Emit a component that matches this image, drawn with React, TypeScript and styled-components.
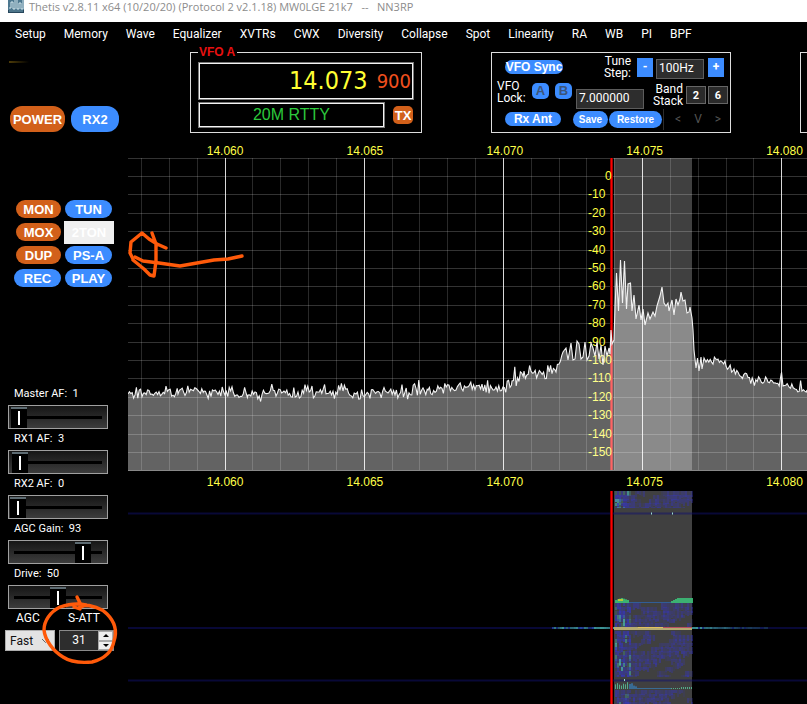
import React, { useState } from "react";
import styled, { createGlobalStyle, css } from "styled-components";

const BLUE = "#3c8cff";
const ORANGE = "#d2601a";
const MARK = "#ff5a0a";

const GlobalStyle = createGlobalStyle`
  * { box-sizing: border-box; }
  body { margin: 0; background: #000; color: #fff; font: 12px Roboto, sans-serif; overflow-x: hidden; }
  button, input, select { font: inherit; margin: 0; }
`;

const Window = styled.div`
  display: flex;
  flex-direction: column;
  min-height: 100vh;
  overflow: hidden;
`;

const TitleBar = styled.header`
  display: flex;
  gap: 5px;
  height: 22px;
  padding-left: 8px;
  background: #fff;
  color: #8c8c8c;
  font-family: "Open Sans", sans-serif;
  font-size: 11px;
  line-height: 14px;
  white-space: pre;
`;

const MenuBar = styled.nav`
  display: flex;
  gap: 18px;
  height: 24px;
  padding-left: 15px;
  line-height: 24px;
`;

const MenuLink = styled.a`
  color: #fff;
  text-decoration: none;
  white-space: nowrap;
`;

const Body = styled.div`
  display: flex;
  flex: 1;
`;

const Sidebar = styled.aside`
  position: relative;
  display: flex;
  flex-direction: column;
  flex: 0 0 128px;
`;

const Smear = styled.i`
  width: 20px;
  height: 2px;
  margin: 15px 0 0 9px;
  background: linear-gradient(90deg, #4e3c08, #000);
`;

const PowerRow = styled.div`
  display: flex;
  gap: 6px;
  margin: 43px 0 0 10px;
`;

const Pill = styled.button<{ $on?: boolean }>`
  padding: 0;
  border: 0;
  border-radius: 10px;
  background: ${(p) => (p.$on ? ORANGE : BLUE)};
  color: #fff;
  font: bold 13px "Liberation Sans", sans-serif;
  white-space: nowrap;
`;

const PowerButton = styled(Pill)<{ $wide?: boolean }>`
  width: ${(p) => (p.$wide ? 55 : 48)}px;
  height: 26px;
  border-radius: 12px;
`;

const ToggleGrid = styled.div`
  display: grid;
  grid-template-columns: 47px 47px;
  grid-auto-rows: 18px;
  gap: 5px 4px;
  justify-items: end;
  margin: 68px 0 0 14px;
`;

const Toggle = styled(Pill)<{ $short?: boolean; $blank?: boolean }>`
  width: ${(p) => (p.$short ? 45 : 47)}px;
  ${(p) =>
    p.$blank &&
    css`
      width: 50px;
      height: 23px;
      margin: -2px -2px 0 0;
      border-radius: 0;
      background: #f0f0f0;
    `}
`;

const Sliders = styled.div`
  display: flex;
  flex-direction: column;
  gap: 2px;
  margin: 99px 20px 0 8px;
`;

const SliderField = styled.label`
  display: flex;
  flex-direction: column;
  gap: 3px;
  font-size: 11px;
  line-height: 16px;
  white-space: pre;
`;

const SliderName = styled.span`
  padding-left: 6px;
`;

const thumb = css`
  width: 16px;
  height: 21px;
  border: 0;
  border-radius: 0;
  border-top: 2px solid #5d6b72;
  background: linear-gradient(#fff, #fff) center / 2px 14px no-repeat #000;
`;

const Range = styled.input`
  appearance: none;
  width: 100%;
  height: 24px;
  padding: 0 1px;
  border: 1px solid #a0a0a0;
  background:
    linear-gradient(#000, #000) center / 88px 3px no-repeat,
    linear-gradient(#161616, #3c3c3c);
  &::-webkit-slider-thumb { appearance: none; ${thumb} }
  &::-moz-range-thumb { ${thumb} }
`;

const AgcRow = styled.div`
  display: grid;
  grid-template-columns: 50px 55px;
  column-gap: 4px;
  row-gap: 4px;
  margin: 1px 0 0 5px;
  font-size: 12px;
`;

const AgcLabel = styled.label<{ $indent: number }>`
  padding-left: ${(p) => p.$indent}px;
  line-height: 16px;
`;

const SelectWrap = styled.div`
  display: grid;
  align-items: center;
  & > * { grid-area: 1 / 1; }
  & > svg { justify-self: end; margin-right: 5px; pointer-events: none; }
`;

const Select = styled.select`
  appearance: none;
  height: 21px;
  padding: 0 0 0 4px;
  border: 1px solid #adadad;
  border-radius: 0;
  background: #e3e3e3;
  color: #111;
  font-size: 12px;
`;

const Stepper = styled.div`
  display: grid;
  grid-template: 1fr 1fr / 1fr 15px;
  height: 21px;
  border: 1px solid #8a8a8a;
  background: #2d2d2d;
`;

const StepValue = styled.input`
  grid-row: span 2;
  min-width: 0;
  width: 100%;
  padding: 0 0 2px;
  border: 0;
  background: transparent;
  color: #fff;
  text-align: center;
`;

const StepButton = styled.button`
  display: grid;
  place-items: center;
  min-height: 0;
  padding: 0;
  border: 1px solid #aaa;
  background: #eee;
  color: #000;
`;

const Overlay = styled.svg`
  position: absolute;
  overflow: visible;
  pointer-events: none;
  fill: none;
  stroke: ${MARK};
  stroke-width: 3.4px;
  stroke-linecap: round;
  stroke-linejoin: round;
`;

const CircleMark = styled(Overlay)`
  left: 44px;
  bottom: 40px;
`;

const ArrowMark = styled(Overlay)`
  left: 1px;
  top: 74px;
`;

const Main = styled.main`
  flex: 1;
  min-width: 0;
`;

const Panels = styled.div`
  display: flex;
  padding: 6px 0 0 62px;
  height: 87px;
`;

const VfoBox = styled.fieldset`
  flex: 0 0 232px;
  min-width: 0;
  height: 86px;
  margin: -5px 69px 0 0;
  padding: 0 7px;
  border: 1px solid #ddd;
`;

const VfoTitle = styled.legend`
  padding: 0 2px 0 1px;
  color: #e81010;
  font: bold 12px/11px "Liberation Sans", sans-serif;
`;

const screen = css`
  border: 2px solid #f4f4f4;
  outline: 1px solid #777;
  outline-offset: -1px;
`;

const FreqDisplay = styled.output`
  ${screen}
  display: flex;
  align-items: center;
  justify-content: flex-end;
  gap: 9px;
  height: 38px;
  margin-top: 4px;
  padding-right: 1px;
  color: #ff3;
  font: 25px/34px "DejaVu Sans Condensed", "DejaVu Sans", sans-serif;
`;

const FreqTail = styled.span`
  color: #f0501e;
  font-size: 20px;
`;

const BandRow = styled.div`
  display: flex;
  align-items: center;
  gap: 8px;
  margin-top: 2px;
`;

const BandName = styled.output`
  ${screen}
  flex: 0 0 187px;
  height: 26px;
  color: #2cc83c;
  font: 16px/22px "Liberation Sans", sans-serif;
  text-align: center;
`;

const TxButton = styled(Pill)`
  width: 20px;
  height: 18px;
  border-radius: 5px;
`;

const SyncBox = styled.section`
  flex: 0 0 240px;
  height: 81px;
  border: 1px solid #ddd;
`;

const EdgeBox = styled.section`
  flex: 1 0 7px;
  height: 81px;
  margin-left: 69px;
  border: 1px solid #ddd;
  border-right: 0;
`;

const SyncRow = styled.div<{ $indent: number; $height: number }>`
  display: flex;
  align-items: center;
  height: ${(p) => p.$height}px;
  padding-left: ${(p) => p.$indent}px;
`;

const Spacer = styled.i<{ $w: number }>`
  flex: 0 0 ${(p) => p.$w}px;
`;

const PanelPill = styled(Pill)<{ $w: number; $h: number; $small?: boolean }>`
  flex: 0 0 ${(p) => p.$w}px;
  height: ${(p) => p.$h}px;
  display: flex;
  align-items: center;
  justify-content: center;
  font-size: ${(p) => (p.$small ? 10 : 12)}px;
`;

const LockButton = styled(Pill)`
  flex: 0 0 17px;
  height: 16px;
  margin-bottom: 9px;
  border-radius: 5px;
  color: #3c5478;
`;

const TwoLine = styled.label<{ $w: number; $right?: boolean }>`
  flex: 0 0 ${(p) => p.$w}px;
  line-height: 12px;
  text-align: ${(p) => (p.$right ? "right" : "left")};
`;

const RaisedLabel = styled(TwoLine)`
  margin-bottom: 7px;
`;

const SquareButton = styled.button`
  flex: 0 0 16px;
  height: 19px;
  padding: 0;
  border: 0;
  background: ${BLUE};
  color: #fff;
  font-weight: bold;
`;

const DarkInput = styled.input<{ $w: number; $low?: boolean }>`
  flex: 0 0 ${(p) => p.$w}px;
  width: ${(p) => p.$w}px;
  height: 20px;
  align-self: ${(p) => (p.$low ? "flex-end" : "center")};
  margin-top: ${(p) => (p.$low ? 0 : 4)}px;
  padding: 0 2px 2px;
  border: 1px solid #5c5c5c;
  background: #2d2d2d;
  color: #fff;
`;

const StackButton = styled.button`
  flex: 0 0 20px;
  height: 18px;
  padding: 0;
  border: 1px solid #666;
  background: #2a2a2a;
  color: #fff;
  font-weight: bold;
  font-size: 11px;
`;

const StackNav = styled.div`
  display: flex;
  flex: 1;
  height: 21px;
  padding-left: 4px;
  border-left: 1px solid #2c2c2c;
`;

const NavButton = styled.button`
  flex: 0 0 20px;
  padding: 0;
  border: 0;
  background: none;
  color: #555;
`;

const Display = styled.div`
  position: relative;
  padding-top: 9px;
`;

const Axis = styled.div<{ $height: number }>`
  display: grid;
  grid-template-columns: repeat(5, 20.6%);
  height: ${(p) => p.$height}px;
  padding: 0;
  margin-left: 4%;
  width: 100%;
  color: #ffff48;
  font: 12px "Liberation Sans", sans-serif;
  line-height: ${(p) => p.$height + 3}px;
  text-align: center;
`;

const Chart = styled.svg`
  display: block;
  width: 100%;
  height: auto;
`;

const LevelText = styled.text`
  fill: #ffff40;
  font: 12px "Liberation Sans", sans-serif;
`;

/* Repeatable noise source, so each render gives the same trace. */
function noise(seed: number) {
  let s = seed;
  return () => {
    s = (s + 0x6d2b79f5) | 0;
    let t = Math.imul(s ^ (s >>> 15), 1 | s);
    t = (t + Math.imul(t ^ (t >>> 7), 61 | t)) ^ t;
    return ((t ^ (t >>> 14)) >>> 0) / 4294967296;
  };
}

/* [x, level, jitter towards the next point]; jitter 0 joins directly. */
const LEVELS: [number, number, number][] = [
  [0, 236, 7], [24, 236, 8], [50, 236, 6], [64, 232, 4], [76, 233, 7], [120, 237, 7], [156, 233, 6],
  [170, 234, 7], [215, 233, 6], [228, 236, 7], [260, 235, 7], [300, 232, 7], [340, 229, 7], [375, 229, 7],
  [384, 223, 6], [396, 213, 6], [410, 216, 8], [428, 214, 6], [431, 206, 6], [435, 194, 0],
  [438, 190, 0], [440, 202, 0], [443, 185, 0], [445, 202, 0], [447, 201, 0], [449, 183, 0],
  [451, 186, 0], [453, 201, 0], [455, 199, 0], [457, 184, 0], [459, 202, 0], [461, 198, 0],
  [463, 185, 0], [465, 190, 0], [467, 198, 0], [469, 184, 0], [471, 201, 0], [473, 187, 0],
  [475, 207, 0], [477, 188, 0], [479, 198, 0], [481, 190, 0], [482, 196, 0],
  [483, 172, 0], [484, 186, 0], [486, 182, 0], [487, 150, 0], [488.5, 115, 0], [490.5, 153, 0],
  [492.5, 102, 0], [494.5, 145, 0], [496.5, 103, 0], [498.5, 151, 0], [500, 126, 0], [502.5, 125, 0],
  [504, 153, 0], [506, 137, 0], [508, 161, 0], [511, 147, 0], [513, 162, 0], [515, 151, 0],
  [517, 167, 0], [520, 155, 0], [522, 161, 0], [525, 154, 0], [527, 158, 0], [529, 148, 0],
  [532, 138, 0], [534, 129, 0], [536, 145, 0], [538, 148, 0], [540, 145, 0], [541, 153, 0],
  [544, 142, 0], [546, 157, 0], [548, 141, 0], [550, 147, 0], [552, 141, 0], [553, 134, 0],
  [555, 143, 0], [557, 142, 0], [559, 155, 0], [561, 154, 0], [562, 149, 0], [564, 160, 0],
  [565, 172, 0], [566, 192, 0], [568, 210, 0], [569.5, 200, 0], [571, 213, 0], [573, 199, 0],
  [574, 211, 0], [576, 200, 0], [578, 204, 6], [590, 201, 5], [598, 208, 5], [606, 211, 5],
  [625, 222, 6], [640, 224, 6], [652, 223, 0], [653.5, 214, 0], [655, 228, 4], [661, 229, 5], [667, 231, 5], [679, 232, 0],
];

function buildTrace() {
  const rnd = noise(77);
  const pts: string[] = [];
  LEVELS.forEach(([x, y, j], i) => {
    pts.push(`${x},${y}`);
    const next = LEVELS[i + 1];
    if (!next || !j) return;
    const step = 1.4;
    for (let px = x + step; px < next[0] - 0.5; px += step) {
      const base = y + ((next[1] - y) * (px - x)) / (next[0] - x);
      const spike = rnd() > 0.95 ? 1.8 : 1;
      const swing = rnd() + rnd() - 1;
      pts.push(`${px.toFixed(1)},${(base + swing * j * spike * 1.2).toFixed(1)}`);
    }
  });
  return pts.join(" ");
}

const TRACE = buildTrace();
const H_LINES = Array.from({ length: 17 }, (_, i) => Math.round(18 + i * 18.4) + 0.5).filter((y) => y < 312);
const V_LINES = Array.from({ length: 24 }, (_, i) => Math.round(13 + i * 27.84) + 0.5);

function Panadapter() {
  return (
    <Chart viewBox="0 0 679 313" role="img" aria-label="Spectrum">
      <rect width="679" height="313" fill="#000" />
      <rect x="486" width="78" height="313" fill="#404040" />
      <g stroke="#fff" strokeOpacity=".2">
        <path d="M0 .5H679" />
        {H_LINES.map((y) => <path key={y} d={`M0 ${y}H679`} />)}
        {V_LINES.map((x, i) => (
          <path key={x} d={`M${x} 0V313`} strokeOpacity={i % 5 === 3 ? 0.85 : 0.16} />
        ))}
      </g>
      <path d="M483.500 0V313" stroke="#7a0000" strokeWidth="3" />
      <path d="M483.500 0V313" stroke="#f00" strokeWidth="1.6" />
      {H_LINES.slice(0, 16).map((y, i) => (
        <LevelText key={y} x={i ? 460 : 477} y={y + 3.5}>{i ? -10 * i : 0}</LevelText>
      ))}
      <polygon points={`0,313 ${TRACE} 679,313`} fill="#fff" fillOpacity=".39" />
      <polyline points={TRACE} fill="none" stroke="#f2f2f2" strokeWidth="1.1" />
      <path d="M0 312.500H679" stroke="#888" />
    </Chart>
  );
}

type Cell = { x: number; y: number; w: number; h: number; c: string; o: number };

function buildCells() {
  const rnd = noise(9);
  const cells: Cell[] = [];
  const bands: [number, number][] = [[0, 17], [112, 136], [140, 186], [199, 213]];
  bands.forEach(([from, to]) => {
    for (let y = from; y < to; y += 4) {
      for (let x = 487; x < 564; x += 2) {
        const hot = x < 502;
        const wave = Math.sin(x / 5 + Math.sin(y / 4) * 2) + Math.sin(y / 6 + x / 17);
        if (wave < -0.4 && !hot) continue;
        cells.push({
          x, y, w: 2, h: Math.min(3 + Math.round(rnd() * 4), to - y),
          c: hot && rnd() > 0.8 ? "#48b0a8" : "#3636b8",
          o: 0.12 + rnd() * (hot ? 0.65 : 0.38),
        });
      }
    }
  });
  for (let x = 424; x < 640; x += 2) {
    const edge = x < 484 ? 0.9 : (650 - x) / 90;
    cells.push({ x, y: 136, w: 2, h: 2, c: rnd() > 0.3 ? "#3f9a98" : "#2444a0", o: Math.min(1, Math.max(0.25, edge * (0.6 + rnd() * 0.5))) });
  }
  for (let x = 487; x < 564; x += 2) {
    const side = x < 500 || x > 541;
    const h = x < 500 ? 5 - Math.abs(x - 493) / 3 : x > 541 ? Math.min(5, (x - 539) / 2) : 1;
    cells.push({ x, y: 112 - h, w: 2, h, c: side ? "#3cbc78" : "#3060a0", o: 0.9 });
    const low = x < 508 ? 2 + rnd() * 5 : x > 552 ? 2 : 1;
    cells.push({ x, y: 198 - low, w: side ? 1 : 2, h: low, c: side ? "#55b890" : "#38709c", o: 0.9 });
  }
  return cells;
}

const CELLS = buildCells();

function Waterfall() {
  return (
    <Chart viewBox="0 0 679 213" role="img" aria-label="Waterfall">
      <rect width="679" height="213" fill="#000" />
      <rect x="486" width="78" height="213" fill="#404040" />
      <path d="M0 22.500H679M0 189.500H679M0 137H679" stroke="#11116e" strokeWidth="2" opacity=".5" />
      <g>{CELLS.map((c, i) => <rect key={i} x={c.x} y={c.y} width={c.w} height={c.h} fill={c.c} opacity={c.o} />)}</g>
      <rect x="486" y="136" width="78" height="3" fill="#b5aa70" />
      <rect x="510" y="136" width="25" height="1" fill="#e0c060" />
      <rect x="535" y="136" width="29" height="1" fill="#b85060" />
      <path d="M523 22.500h1M544 22.500h1M496 189h1" stroke="#9ce0d0" strokeWidth="2" />
      <rect x="490" y="108" width="5" height="2" fill="#b6c838" />
      <path d="M483.500 0V213" stroke="#7a0000" strokeWidth="3" />
      <path d="M483.500 0V213" stroke="#f00" strokeWidth="1.6" />
    </Chart>
  );
}

const FREQS = ["14.060", "14.065", "14.070", "14.075", "14.080"];

function FrequencyAxis({ height }: { height: number }) {
  return <Axis $height={height}>{FREQS.map((f) => <span key={f}>{f}</span>)}</Axis>;
}

function Slider({ name, value, min = 0, max = 100 }: { name: string; value: number; min?: number; max?: number }) {
  const [v, setV] = useState(value);
  return (
    <SliderField>
      <SliderName>{`${name}:  ${v}`}</SliderName>
      <Range type="range" min={min} max={max} value={v} onChange={(e) => setV(Number(e.target.value))} />
    </SliderField>
  );
}

const MENU = ["Setup", "Memory", "Wave", "Equalizer", "XVTRs", "CWX", "Diversity", "Collapse", "Spot", "Linearity", "RA", "WB", "PI", "BPF"];

export default function App() {
  const [att, setAtt] = useState(31);
  return (
    <Window>
      <GlobalStyle />
      <TitleBar>
        <svg width="16" height="13" viewBox="0 0 16 13" aria-hidden="true">
          <rect width="16" height="13" fill="#4d7890" />
          <path d="M0 10h16v3H0z" fill="#27475c" />
          <path d="M1 8h2V2h2v7h2V0M9 0v9h2V3h2v6h2V0" fill="none" stroke="#d5e8ef" />
          <path d="M1 11h14" stroke="#74a4b8" />
        </svg>
        <span>{"Thetis v2.8.11 x64 (10/20/20) (Protocol 2 v2.1.18) MW0LGE 21k7   --   NN3RP"}</span>
      </TitleBar>
      <MenuBar>{MENU.map((m) => <MenuLink key={m} href="#">{m}</MenuLink>)}</MenuBar>
      <Body>
        <Sidebar>
          <Smear />
          <PowerRow>
            <PowerButton $on $wide>POWER</PowerButton>
            <PowerButton>RX2</PowerButton>
          </PowerRow>
          <ToggleGrid>
            <Toggle $on $short>MON</Toggle>
            <Toggle>TUN</Toggle>
            <Toggle $on $short>MOX</Toggle>
            <Toggle $blank>2TON</Toggle>
            <Toggle $on $short>DUP</Toggle>
            <Toggle>PS-A</Toggle>
            <Toggle>REC</Toggle>
            <Toggle>PLAY</Toggle>
          </ToggleGrid>
          <Sliders>
            <Slider name="Master AF" value={1} />
            <Slider name="RX1 AF" value={3} />
            <Slider name="RX2 AF" value={0} />
            <Slider name="AGC Gain" value={93} min={-20} max={120} />
            <Slider name="Drive" value={50} />
          </Sliders>
          <AgcRow>
            <AgcLabel htmlFor="agc" $indent={11}>AGC</AgcLabel>
            <AgcLabel htmlFor="satt" $indent={9}>S-ATT</AgcLabel>
            <SelectWrap>
              <Select id="agc" defaultValue="Fast">
                <option>Fast</option>
                <option>Med</option>
                <option>Slow</option>
              </Select>
              <svg width="9" height="6" fill="none" stroke="#666" aria-hidden="true"><path d="M1 1L4.500 4.500L8 1" /></svg>
            </SelectWrap>
            <Stepper>
              <StepValue id="satt" value={att} onChange={(e) => setAtt(Number(e.target.value) || 0)} />
              <StepButton aria-label="Increase" onClick={() => setAtt(att + 1)}>
                <svg width="6" height="3"><path d="M0 3L3 0L6 3z" /></svg>
              </StepButton>
              <StepButton aria-label="Decrease" onClick={() => setAtt(att - 1)}>
                <svg width="6" height="3"><path d="M0 0L3 3L6 0z" /></svg>
              </StepButton>
            </Stepper>
          </AgcRow>
          <CircleMark width="74" height="70" viewBox="0 0 74 70" aria-hidden="true">
            <path d="M33 3L36 9L36 15L30 13M37 13L42 11C34 9 25 10 16 13C6 18 0 27 0 36C1 46 9 57 19 63C28 69 38 69 48 68C60 65 68 58 70 47C74 35 69 26 63 20C57 14 48 11 37 11" />
          </CircleMark>
        </Sidebar>
        <Main>
          <Panels>
            <VfoBox>
              <VfoTitle>VFO A</VfoTitle>
              <FreqDisplay>14.073<FreqTail>900</FreqTail></FreqDisplay>
              <BandRow>
                <BandName>20M RTTY</BandName>
                <TxButton $on>TX</TxButton>
              </BandRow>
            </VfoBox>
            <SyncBox>
              <SyncRow $indent={13} $height={28}>
                <PanelPill $w={58} $h={14}>VFO Sync</PanelPill>
                <Spacer $w={38} />
                <TwoLine htmlFor="step" $w={30} $right>Tune Step:</TwoLine>
                <Spacer $w={6} />
                <SquareButton>-</SquareButton>
                <Spacer $w={3} />
                <DarkInput id="step" $w={48} defaultValue="100Hz" />
                <Spacer $w={4} />
                <SquareButton>+</SquareButton>
              </SyncRow>
              <SyncRow $indent={5} $height={28}>
                <RaisedLabel htmlFor="lock" $w={30}>VFO Lock:</RaisedLabel>
                <Spacer $w={5} />
                <LockButton id="lock">A</LockButton>
                <Spacer $w={6} />
                <LockButton>B</LockButton>
                <Spacer $w={4} />
                <DarkInput aria-label="Stored frequency" $w={68} $low defaultValue="7.000000" />
                <Spacer $w={7} />
                <TwoLine htmlFor="stack" $w={32} $right>Band Stack</TwoLine>
                <Spacer $w={3} />
                <StackButton id="stack">2</StackButton>
                <Spacer $w={2} />
                <StackButton>6</StackButton>
              </SyncRow>
              <SyncRow $indent={13} $height={20}>
                <PanelPill $w={56} $h={14}>Rx Ant</PanelPill>
                <Spacer $w={12} />
                <PanelPill $w={35} $h={17} $small>Save</PanelPill>
                <Spacer $w={1} />
                <PanelPill $w={53} $h={17} $small>Restore</PanelPill>
                <Spacer $w={1} />
                <StackNav>
                  <NavButton>&lt;</NavButton>
                  <NavButton>V</NavButton>
                  <NavButton>&gt;</NavButton>
                </StackNav>
              </SyncRow>
            </SyncBox>
            <EdgeBox />
          </Panels>
          <Display>
            <FrequencyAxis height={16} />
            <Panadapter />
            <FrequencyAxis height={20} />
            <Waterfall />
            <ArrowMark width="120" height="60" viewBox="0 0 120 60" aria-hidden="true">
              <g transform="translate(0 26)">
                <path d="M113 23L99 26L85 27L51 33L30 30L14 28L6 24" />
                <path d="M4 26L1 20L2 9L13 0L20 6L28 11L37 15M23 0L27 11V28L25 43L21 42L15 36L4 27" />
              </g>
            </ArrowMark>
          </Display>
        </Main>
      </Body>
    </Window>
  );
}
